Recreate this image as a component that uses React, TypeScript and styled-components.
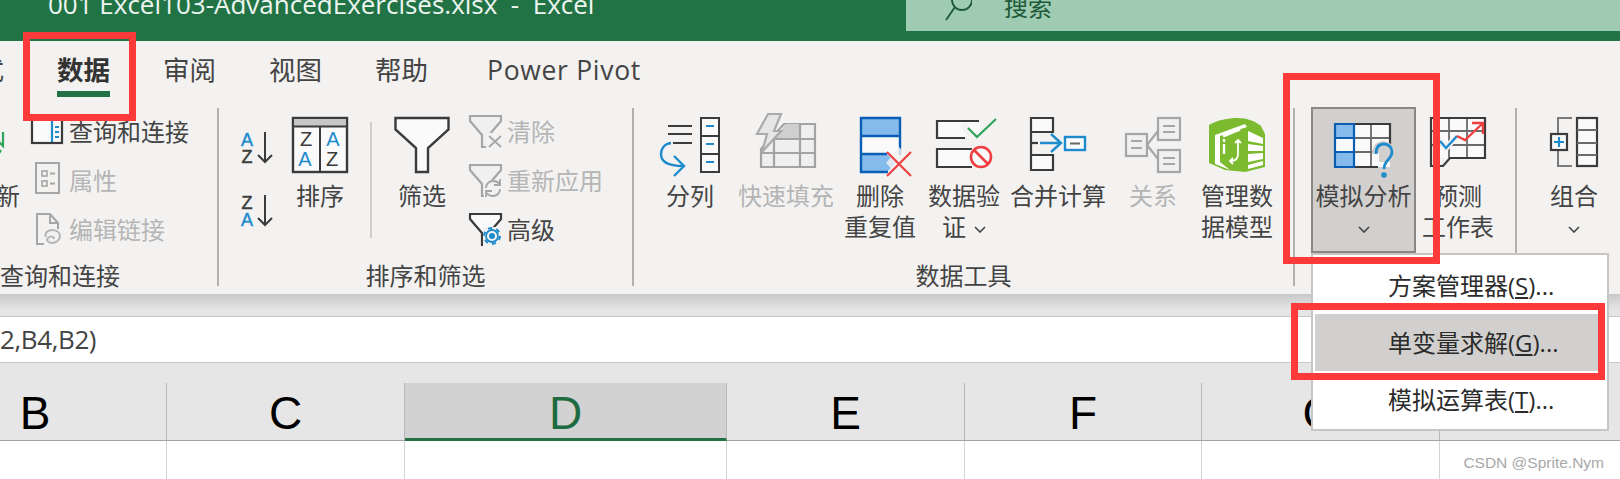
import React from 'react'
import styled, { createGlobalStyle } from 'styled-components'

const GlobalStyle = createGlobalStyle`
    html, body {
        margin: 0;
        padding: 0;
        background: #fff;
    }
`

const FONT = `"Open Sans", "Noto Sans CJK SC", sans-serif`
const DARK = '#3b3b3b'
const BLUE = '#1e8bcd'
const NAVY = '#0a5fb4'
const SKY = '#85bbec'
const GRAY = '#a6a6a6'
const PAPER = '#fafafa'

const Page = styled.div`
    position: relative;
    width: 1620px;
    height: 479px;
    overflow: hidden;
    font-family: ${ FONT };
    background: #fff;
`

const TitleBar = styled.div`
    display: flex;
    height: 41px;
    overflow: hidden;
    background: #217346;
`

const FileName = styled.div`
    margin: -11px 0 0 48px;
    font-size: 26px;
    line-height: 30px;
    color: #eef5f0;
    white-space: pre;
`

const SearchBox = styled.div`
    display: flex;
    align-items: flex-start;
    gap: 32px;
    margin-left: auto;
    padding-left: 38px;
    width: 676px;
    height: 31px;
    background: #9fcbb2;
    color: #1d5a38;
    font-size: 24px;
    line-height: 24px;
`

const SearchText = styled.span`
    margin-top: -5px;
`

const TabRow = styled.div`
    display: flex;
    gap: 53px;
    height: 67px;
    margin-left: -49px;
    background: #f3f2f1;
`

const Tab = styled.div<{ $active?: boolean; $latin?: boolean }>`
    height: 56px;
    margin: 0;
    padding-top: 11px;
    margin-left: ${ p => p.$latin ? '6px' : '0' };
    box-sizing: border-box;
    border-bottom: ${ p => p.$active ? '6px solid #217346' : '0' };
    font-size: 26.5px;
    letter-spacing: ${ p => p.$latin ? '0.7px' : '0' };
    line-height: 36px;
    font-weight: ${ p => p.$active ? 700 : 400 };
    color: ${ p => p.$active ? '#333' : '#444' };
    white-space: nowrap;
`

const Ribbon = styled.div`
    display: flex;
    height: 186px;
    background: #f3f2f1;
`

const Group = styled.div<{ $w: number }>`
    display: flex;
    flex-direction: column;
    flex: none;
    width: ${ p => p.$w }px;
`

const GroupBody = styled.div<{ $pad?: number }>`
    display: flex;
    height: 152px;
    padding-left: ${ p => p.$pad ?? 0 }px;
`

const GroupLabel = styled.div<{ $left?: boolean }>`
    height: 32px;
    font-size: 24px;
    line-height: 32px;
    color: #444;
    white-space: nowrap;
    text-align: ${ p => p.$left ? 'left' : 'center' };
`

const GroupLine = styled.div`
    flex: none;
    width: 2px;
    height: 178px;
    background: #b3b0ad;
`

const BigButton = styled.div<{ $w: number; $gapLeft?: number; $off?: boolean }>`
    display: flex;
    flex-direction: column;
    align-items: center;
    flex: none;
    width: ${ p => p.$w }px;
    margin-left: ${ p => p.$gapLeft ?? 0 }px;
    padding-top: 9px;
    color: ${ p => p.$off ? '#b5b5b5' : '#444' };
`

const PressedButton = styled(BigButton)`
    box-sizing: border-box;
    height: 146px;
    margin-top: -1px;
    padding-top: 14px;
    background: #d2d0ce;
    border: 2px solid #8a8886;
`

const IconSlot = styled.div<{ $h?: number; $nudge?: number }>`
    display: flex;
    justify-content: center;
    flex: none;
    height: ${ p => p.$h ?? 64 }px;
    padding-left: ${ p => p.$nudge ?? 0 }px;

    svg {
        display: block;
        overflow: visible;
    }
`

const ButtonLabel = styled.div`
    margin-top: -1px;
    font-size: 24px;
    line-height: 31px;
    text-align: center;
    white-space: nowrap;
`

const Chevron = styled.svg<{ $lone?: boolean }>`
    display: inline-block;
    width: 12px;
    height: 7px;
    margin-left: ${ p => p.$lone ? 0 : 8 }px;
    vertical-align: 3px;
`

const SmallColumn = styled.div<{ $gapLeft: number }>`
    display: flex;
    flex-direction: column;
    flex: none;
    height: 147px;
    margin: -2px 0 0 ${ p => p.$gapLeft }px;
`

const SmallRow = styled.div<{ $off?: boolean }>`
    display: flex;
    align-items: center;
    gap: 6px;
    height: 49px;
    font-size: 24px;
    white-space: nowrap;
    color: ${ p => p.$off ? '#b5b5b5' : '#444' };

    svg {
        flex: none;
        overflow: visible;
    }
`

const SortColumn = styled.div`
    display: flex;
    flex-direction: column;
    gap: 32px;
    flex: none;
    padding-top: 24px;

    svg {
        display: block;
        overflow: visible;
    }
`

const InnerLine = styled.div<{ $gapLeft: number }>`
    flex: none;
    width: 2px;
    height: 116px;
    margin: 14px 0 0 ${ p => p.$gapLeft }px;
    background: #d0cecc;
`

const ShadowBand = styled.div`
    height: 22px;
    background: linear-gradient(#c9c9c9, #e4e4e4 70%, #e6e6e6);
    border-bottom: 1px solid #c6c6c6;
`

const FormulaBar = styled.div`
    box-sizing: border-box;
    height: 46px;
    font-size: 26px;
    letter-spacing: -0.4px;
    line-height: 44px;
    color: #444;
    background: #fff;
    border-bottom: 1px solid #c8c8c8;
`

const HeaderStrip = styled.div`
    display: flex;
    height: 78px;
    box-sizing: border-box;
    margin-left: -96px;
    padding-top: 20px;
    background: #e6e6e6;
    border-bottom: 1px solid #a3a3a3;
`

const HeaderCell = styled.div<{ $w: number; $sel?: boolean }>`
    flex: none;
    box-sizing: border-box;
    width: ${ p => p.$w }px;
    height: ${ p => p.$sel ? 58 : 57 }px;
    font-family: "Liberation Sans", sans-serif;
    font-size: 46px;
    line-height: 60px;
    text-align: center;
    color: ${ p => p.$sel ? '#1f6b41' : '#000' };
    background: ${ p => p.$sel ? '#d2d2d2' : 'transparent' };
    border-right: 1px solid #b8b8b8;
    border-bottom: ${ p => p.$sel ? '3px solid #217346' : '0' };
`

const CellRow = styled.div`
    display: flex;
    height: 38px;
    margin-left: -96px;
`

const Cell = styled.div<{ $w: number }>`
    flex: none;
    box-sizing: border-box;
    width: ${ p => p.$w }px;
    border-right: 1px solid #d4d4d4;
`

const Menu = styled.div`
    position: absolute;
    left: 1311px;
    top: 253px;
    box-sizing: border-box;
    width: 298px;
    height: 178px;
    padding: 2px 0 0 2px;
    background: #fff;
    border: 2px solid #c8c6c4;
`

const MenuItem = styled.div<{ $on?: boolean }>`
    height: 57px;
    margin-right: 8px;
    padding-left: 73px;
    font-size: 24px;
    line-height: 57px;
    color: #2b2b2b;
    white-space: nowrap;
    background: ${ p => p.$on ? '#d2d0ce' : 'transparent' };
`

const RedFrame = styled.div<{ $x: number; $y: number; $w: number; $h: number }>`
    position: absolute;
    left: ${ p => p.$x }px;
    top: ${ p => p.$y }px;
    width: ${ p => p.$w }px;
    height: ${ p => p.$h }px;
    box-sizing: border-box;
    border: 7px solid #fd3a3a;
`

const Watermark = styled.div`
    position: absolute;
    right: 16px;
    top: 453px;
    font-family: "Liberation Sans", sans-serif;
    font-size: 15.500px;
    line-height: 20px;
    color: #a8a8a8;
`

const SvgLetter = styled.text`
    font-family: "Liberation Sans", sans-serif;
`

const Down: React.FC<{ lone?: boolean }> = ({ lone }) => (
    <Chevron $lone={ lone } viewBox="0 0 12 7"><path d="M1 1l5 5 5-5" fill="none" stroke="#444" strokeWidth="1.6" /></Chevron>
)

const SearchIcon = () => (
    <svg width="28" height="24" viewBox="0 0 28 24">
        <circle cx="18" cy="0" r="10" fill="none" stroke="#1d5a38" strokeWidth="1.8" />
        <path d="M11 7L2 20" stroke="#1d5a38" strokeWidth="1.8" />
    </svg>
)

const SortIcon: React.FC<{ top: string; bottom: string; topBlue: boolean }> = ({ top, bottom, topBlue }) => (
    <svg width="32" height="31" viewBox="0 0 32 31">
        <SvgLetter x="7" y="13.5" fontSize="18" textAnchor="middle" fill={ topBlue ? BLUE : DARK } stroke={ topBlue ? BLUE : DARK } strokeWidth="0.5">{ top }</SvgLetter>
        <SvgLetter x="7" y="31" fontSize="18" textAnchor="middle" fill={ topBlue ? DARK : BLUE } stroke={ topBlue ? DARK : BLUE } strokeWidth="0.5">{ bottom }</SvgLetter>
        <path d="M25 0v30M18 23l7 7 7-7" fill="none" stroke={ DARK } strokeWidth="2" />
    </svg>
)

const SortBigIcon = () => (
    <svg width="56" height="56" viewBox="0 0 56 56">
        <rect x="1" y="1" width="54" height="54" fill={ PAPER } stroke={ DARK } strokeWidth="2.4" />
        <rect x="2" y="2" width="52" height="7" fill="#c8c6c4" />
        <path d="M1 9.5h54M28 9.5v46" stroke={ DARK } strokeWidth="2" />
        <SvgLetter x="14" y="29" fontSize="20" textAnchor="middle" fill={ DARK }>Z</SvgLetter>
        <SvgLetter x="13" y="49" fontSize="20" textAnchor="middle" fill={ BLUE }>A</SvgLetter>
        <SvgLetter x="41" y="29" fontSize="20" textAnchor="middle" fill={ BLUE }>A</SvgLetter>
        <SvgLetter x="40" y="49" fontSize="20" textAnchor="middle" fill={ DARK }>Z</SvgLetter>
    </svg>
)

const FunnelIcon = () => (
    <svg width="56" height="56" viewBox="0 0 56 56">
        <path d="M1.5 1h53v11.500L34 31v24H22V31L1.500 12.500z" fill={ PAPER } stroke={ DARK } strokeWidth="2.4" />
    </svg>
)

const TextColumnsIcon = () => (
    <svg width="60" height="60" viewBox="0 0 60 60">
        <path d="M8 9h24M8 17h24M13 26h19" stroke={ DARK } strokeWidth="2" />
        <rect x="41" y="1" width="18" height="54" fill={ PAPER } stroke={ DARK } strokeWidth="2" />
        <path d="M41 19h18M41 37h18" stroke={ DARK } strokeWidth="2" />
        <path d="M46 9h8M46 27h8M46 45h8" stroke={ BLUE } strokeWidth="2.200" />
        <path d="M11 26C4 27 1 32 1 37c0 7 6 12 22 12M14 39l10 10-10 10" fill="none" stroke={ BLUE } strokeWidth="2.400" />
    </svg>
)

const FlashFillIcon = () => (
    <svg width="60" height="64" viewBox="0 0 60 64">
        <g transform="translate(0 -4)">
            <path d="M5 54V36L28 11h31v43z" fill="#efefef" stroke="#a3a3a3" strokeWidth="2.200" />
            <path d="M18 26L30 11h14v14z" fill="#cfcfcf" />
            <path d="M18 54V26h41M44 11v43M5 40h54" fill="none" stroke="#a3a3a3" strokeWidth="2.200" />
            <path d="M12 1h13l-7 17h7L6 39l5-18H1z" fill="#e6e6e6" stroke="#ababab" strokeWidth="2.200" />
        </g>
    </svg>
)

const RemoveDupIcon = () => (
    <svg width="52" height="60" viewBox="0 0 52 60">
        <rect x="1" y="1" width="39" height="18" fill={ SKY } />
        <rect x="1" y="19" width="39" height="18" fill={ PAPER } />
        <path d="M1 37h26l9 9-9 9H1z" fill={ SKY } />
        <path d="M28 55H1V1h39v37M1 19h39M1 37h26" fill="none" stroke={ NAVY } strokeWidth="2.400" />
        <path d="M39 30l13 14-13 16-13-14z" fill="#f3f2f1" opacity="0.8" />
        <path d="M27 59L51 35M27 35l24 24" stroke="#ee4040" strokeWidth="2.200" />
    </svg>
)

const ValidationIcon = () => (
    <svg width="60" height="52" viewBox="0 0 60 52">
        <rect x="1" y="4" width="43" height="17" fill={ PAPER } />
        <rect x="1" y="32" width="36" height="18" fill={ PAPER } />
        <path d="M43 4H1v17h28M36 32H1v18h35" fill="none" stroke={ DARK } strokeWidth="2.200" />
        <path d="M27 7l9 12 6 0" fill="none" stroke="#f3f2f1" strokeWidth="7" />
        <path d="M32 11l9 9L60 2" fill="none" stroke="#2ea55a" strokeWidth="2.200" />
        <circle cx="45" cy="40" r="12" fill="#f3f2f1" />
        <circle cx="45" cy="40" r="10" fill={ PAPER } stroke="#ee4040" strokeWidth="2.600" />
        <path d="M38 33l14 14" stroke="#ee4040" strokeWidth="2.600" />
    </svg>
)

const ConsolidateIcon = () => (
    <svg width="56" height="56" viewBox="0 0 56 56">
        <path d="M1 1h22v14H1zM1 38h22v15H1z" fill={ PAPER } />
        <path d="M1 15h22v-14H1v52h22V38H1" fill="none" stroke={ DARK } strokeWidth="2.200" />
        <path d="M1 26h7" stroke={ DARK } strokeWidth="2.200" />
        <path d="M10 26h20M21 17l10 9-10 9" fill="none" stroke={ BLUE } strokeWidth="2.400" />
        <rect x="35" y="20" width="20" height="13" fill={ PAPER } stroke={ BLUE } strokeWidth="2.400" />
        <path d="M40 26.500h10" stroke="#666" strokeWidth="2" />
    </svg>
)

const RelationsIcon = () => (
    <svg width="56" height="56" viewBox="0 0 56 56" fill="none" stroke={ GRAY } strokeWidth="2.200">
        <rect x="1" y="17" width="21" height="22" fill="#f0f0f0" />
        <rect x="33" y="1" width="22" height="22" fill="#f0f0f0" />
        <rect x="33" y="33" width="22" height="22" fill="#f0f0f0" />
        <path d="M22 28l11-14M22 28l11 14" />
        <path d="M6 24h11M6 31h11M38 9h12M38 15h12M38 41h12M38 47h12" strokeWidth="2" />
    </svg>
)

const DataModelIcon = () => (
    <svg width="56" height="56" viewBox="0 0 56 56">
        <path d="M0 8C9 3 18 1 29 1c9 0 17 3 23 8l4 8v33l-20 5L16 53 0 46z" fill="#7cbb30" />
        <path d="M6 18L36 7l2 3L11 19v26l10 8-15-6z" fill="#fff" />
        <path d="M39 14l15 7v6l-15-3zM39 27l15 2v5l-15 0zM39 37l15-1v6l-15 3zM39 48l15-4v4l-15 4z" fill="#fff" />
        <path d="M14 19l17-7" stroke="#fff" strokeWidth="3.400" />
        <path d="M15 22v3M15 27v10" stroke="#fff" strokeWidth="2.400" />
        <path d="M29 23v14c0 5-3 7-7 7M26 26l3-3 3 3M24 41l-3 3 3 3" fill="none" stroke="#fff" strokeWidth="1.800" />
    </svg>
)

const WhatIfIcon = () => (
    <svg width="62" height="58" viewBox="0 0 62 58">
        <rect x="1" y="1" width="55" height="43" fill={ PAPER } />
        <rect x="1" y="1" width="19" height="14" fill={ SKY } />
        <rect x="1" y="29" width="19" height="15" fill={ SKY } />
        <path d="M37 1v43M20 15h36M20 29h30" stroke="#6b6b6b" strokeWidth="1.800" />
        <path d="M20 1h36v32M20 44h24" fill="none" stroke={ DARK } strokeWidth="2.200" />
        <path d="M20 1H1v43h19zM1 15h19M1 29h19" fill="none" stroke={ NAVY } strokeWidth="2.200" />
        <path d="M38 31c0-8 5-13 11-13s11 4 11 11c0 5-3 8-5 10h-10V30z" fill="#d2d0ce" />
        <path d="M42 31c0-7 3-10 8-10 5 0 8 4 8 8 0 7-8 8-8 17" fill="none" stroke={ BLUE } strokeWidth="2.800" />
        <circle cx="50" cy="52" r="2.800" fill={ BLUE } />
    </svg>
)

const ForecastIcon = () => (
    <svg width="56" height="50" viewBox="0 0 56 50">
        <rect x="1" y="1" width="54" height="40" fill={ PAPER } />
        <path d="M19 1v40M37 1v40M1 14h54M1 28h54" stroke="#6b6b6b" strokeWidth="1.800" />
        <path d="M1 41V1h54v40H20l-7 8H1z" fill="none" stroke={ DARK } strokeWidth="2.200" />
        <path d="M8 21l8 10 11-12" fill="none" stroke="#f3f2f1" strokeWidth="6" />
        <path d="M10 24l6 7 11-12" fill="none" stroke={ BLUE } strokeWidth="2.400" />
        <path d="M27 19l8 4L52 7M42 6h11v11" fill="none" stroke="#ee4040" strokeWidth="2.400" />
    </svg>
)

const GroupIcon = () => (
    <svg width="48" height="50" viewBox="0 0 48 50">
        <path d="M22 1H8v15M8 34v15h14" fill="none" stroke="#7a7a7a" strokeWidth="2" />
        <rect x="1" y="17" width="16" height="16" fill={ PAPER } stroke={ DARK } strokeWidth="2.200" />
        <path d="M9 20v10M4 25h10" stroke={ BLUE } strokeWidth="2.200" />
        <rect x="27" y="1" width="20" height="48" fill={ PAPER } stroke={ DARK } strokeWidth="2.200" />
        <path d="M27 13h20M27 26h20M27 38h20" stroke="#6b6b6b" strokeWidth="1.800" />
    </svg>
)

const RefreshStub = () => (
    <svg width="24" height="64" viewBox="0 0 24 64">
        <path d="M2 24l5 5V15M2 38l3-5" fill="none" stroke="#2ea55a" strokeWidth="2.200" />
    </svg>
)

const QueriesIcon = () => (
    <svg width="32" height="32" viewBox="0 0 32 32">
        <rect x="1" y="1" width="30" height="27" fill={ PAPER } stroke={ DARK } strokeWidth="2.200" />
        <path d="M21 2v25" stroke={ BLUE } strokeWidth="2.200" />
        <path d="M24 12h4M24 17h4M24 22h4" stroke={ BLUE } strokeWidth="2" />
    </svg>
)

const PropertiesIcon = () => (
    <svg width="32" height="32" viewBox="0 0 32 32" fill="none" stroke={ GRAY } strokeWidth="2">
        <rect x="5" y="-1" width="23" height="30" />
        <rect x="11" y="7" width="5" height="5" strokeWidth="1.600" />
        <rect x="11" y="17" width="5" height="5" strokeWidth="1.600" />
        <path d="M19 9.500h5M19 19.500h5" />
    </svg>
)

const EditLinksIcon = () => (
    <svg width="32" height="32" viewBox="0 0 32 32" fill="none" stroke={ GRAY } strokeWidth="2">
        <path d="M13 31H6V1h13l8 9v6M19 1v9h8" />
        <path d="M15 24c-2-4 2-7 6-7s8 2 8 6-4 7-8 7-6-3-4-5 6-2 6 1" stroke="#b5b5b5" />
    </svg>
)

const SmallFunnel: React.FC<{ color: string }> = ({ color }) => (
    <path d="M18 32H13V20L1 6V1h31v5L20 20" fill="#f0f0f0" stroke={ color } strokeWidth="2.200" />
)

const ClearFilterIcon = () => (
    <svg width="32" height="32" viewBox="0 0 32 32">
        <SmallFunnel color={ GRAY } />
        <rect x="17" y="18" width="16" height="15" fill="#f3f2f1" />
        <path d="M20 21l12 11M32 21L20 32" stroke={ GRAY } strokeWidth="1.800" />
    </svg>
)

const ReapplyIcon = () => (
    <svg width="32" height="32" viewBox="0 0 32 32">
        <SmallFunnel color={ GRAY } />
        <rect x="15" y="16" width="18" height="17" fill="#f3f2f1" />
        <path d="M17 24c0-4 3-7 7-7 3 0 5 1 7 3M31 15v6h-6M31 25c0 4-3 7-7 7-3 0-5-1-6-3M17 33v-6h6" fill="none" stroke={ GRAY } strokeWidth="1.800" />
    </svg>
)

const AdvancedIcon = () => (
    <svg width="32" height="32" viewBox="0 0 32 32">
        <path d="M18 32H13V20L1 6V1h31v5L20 20" fill={ PAPER } stroke={ DARK } strokeWidth="2.200" />
        <rect x="14" y="14" width="19" height="19" fill="#f3f2f1" />
        <circle cx="23" cy="23" r="6" fill="#f3f2f1" stroke={ BLUE } strokeWidth="1.800" />
        <circle cx="23" cy="23" r="8" fill="none" stroke={ BLUE } strokeWidth="2" strokeDasharray="4.190 4.190" />
        <circle cx="23" cy="23" r="3" fill={ BLUE } />
    </svg>
)

const columnWidths = [ 263, 238, 322, 238, 237, 238, 200 ]
const columnNames = [ 'B', 'C', 'D', 'E', 'F', 'G', '' ]

const App: React.FC = () => {
    return (
        <Page>
            <GlobalStyle />
            <TitleBar>
                <FileName>001 Excel103-AdvancedExercises.xlsx  -  Excel</FileName>
                <SearchBox>
                    <SearchIcon />
                    <SearchText>搜索</SearchText>
                </SearchBox>
            </TitleBar>
            <TabRow>
                <Tab>公式</Tab>
                <Tab $active>数据</Tab>
                <Tab>审阅</Tab>
                <Tab>视图</Tab>
                <Tab>帮助</Tab>
                <Tab $latin>Power Pivot</Tab>
            </TabRow>
            <Ribbon>
                <Group $w={ 217 }>
                    <GroupBody>
                        <BigButton $w={ 24 } $gapLeft={ -4 }>
                            <IconSlot><RefreshStub /></IconSlot>
                            <ButtonLabel>新</ButtonLabel>
                        </BigButton>
                        <SmallColumn $gapLeft={ 11 }>
                            <SmallRow><QueriesIcon />查询和连接</SmallRow>
                            <SmallRow $off><PropertiesIcon />属性</SmallRow>
                            <SmallRow $off><EditLinksIcon />编辑链接</SmallRow>
                        </SmallColumn>
                    </GroupBody>
                    <GroupLabel $left>查询和连接</GroupLabel>
                </Group>
                <GroupLine />
                <Group $w={ 413 }>
                    <GroupBody $pad={ 21 }>
                        <SortColumn>
                            <SortIcon top="A" bottom="Z" topBlue />
                            <SortIcon top="Z" bottom="A" topBlue={ false } />
                        </SortColumn>
                        <BigButton $w={ 64 } $gapLeft={ 16 }>
                            <IconSlot><SortBigIcon /></IconSlot>
                            <ButtonLabel>排序</ButtonLabel>
                        </BigButton>
                        <InnerLine $gapLeft={ 18 } />
                        <BigButton $w={ 64 } $gapLeft={ 18 }>
                            <IconSlot><FunnelIcon /></IconSlot>
                            <ButtonLabel>筛选</ButtonLabel>
                        </BigButton>
                        <SmallColumn $gapLeft={ 15 }>
                            <SmallRow $off><ClearFilterIcon />清除</SmallRow>
                            <SmallRow $off><ReapplyIcon />重新应用</SmallRow>
                            <SmallRow><AdvancedIcon />高级</SmallRow>
                        </SmallColumn>
                    </GroupBody>
                    <GroupLabel>排序和筛选</GroupLabel>
                </Group>
                <GroupLine />
                <Group $w={ 659 }>
                    <GroupBody $pad={ 8 }>
                        <BigButton $w={ 96 }>
                            <IconSlot><TextColumnsIcon /></IconSlot>
                            <ButtonLabel>分列</ButtonLabel>
                        </BigButton>
                        <BigButton $w={ 96 } $off>
                            <IconSlot><FlashFillIcon /></IconSlot>
                            <ButtonLabel>快速填充</ButtonLabel>
                        </BigButton>
                        <BigButton $w={ 92 }>
                            <IconSlot $nudge={ 12 }><RemoveDupIcon /></IconSlot>
                            <ButtonLabel>删除<br />重复值</ButtonLabel>
                        </BigButton>
                        <BigButton $w={ 76 }>
                            <IconSlot $nudge={ 4 }><ValidationIcon /></IconSlot>
                            <ButtonLabel>数据验<br />证<Down /></ButtonLabel>
                        </BigButton>
                        <BigButton $w={ 112 }>
                            <IconSlot><ConsolidateIcon /></IconSlot>
                            <ButtonLabel>合并计算</ButtonLabel>
                        </BigButton>
                        <BigButton $w={ 78 } $off>
                            <IconSlot><RelationsIcon /></IconSlot>
                            <ButtonLabel>关系</ButtonLabel>
                        </BigButton>
                        <BigButton $w={ 90 }>
                            <IconSlot><DataModelIcon /></IconSlot>
                            <ButtonLabel>管理数<br />据模型</ButtonLabel>
                        </BigButton>
                    </GroupBody>
                    <GroupLabel>数据工具</GroupLabel>
                </Group>
                <GroupLine />
                <Group $w={ 220 }>
                    <GroupBody $pad={ 16 }>
                        <PressedButton $w={ 105 }>
                            <IconSlot $h={ 58 } $nudge={ 3 }><WhatIfIcon /></IconSlot>
                            <ButtonLabel>模拟分析<br /><Down lone /></ButtonLabel>
                        </PressedButton>
                        <BigButton $w={ 84 }>
                            <IconSlot><ForecastIcon /></IconSlot>
                            <ButtonLabel>预测<br />工作表</ButtonLabel>
                        </BigButton>
                    </GroupBody>
                </Group>
                <GroupLine />
                <Group $w={ 100 }>
                    <GroupBody $pad={ 17 }>
                        <BigButton $w={ 80 }>
                            <IconSlot><GroupIcon /></IconSlot>
                            <ButtonLabel>组合<br /><Down lone /></ButtonLabel>
                        </BigButton>
                    </GroupBody>
                </Group>
            </Ribbon>
            <ShadowBand />
            <FormulaBar>2,B4,B2)</FormulaBar>
            <HeaderStrip>
                { columnNames.map((name, i) => (
                    <HeaderCell key={ i } $w={ columnWidths[i] } $sel={ name === 'D' }>{ name }</HeaderCell>
                )) }
            </HeaderStrip>
            <CellRow>
                { columnNames.map((name, i) => <Cell key={ i } $w={ columnWidths[i] } />) }
            </CellRow>
            <Menu>
                <MenuItem>方案管理器(<u>S</u>)...</MenuItem>
                <MenuItem $on>单变量求解(<u>G</u>)...</MenuItem>
                <MenuItem>模拟运算表(<u>T</u>)...</MenuItem>
            </Menu>
            <RedFrame $x={ 23 } $y={ 32 } $w={ 113 } $h={ 89 } />
            <RedFrame $x={ 1283 } $y={ 73 } $w={ 157 } $h={ 191 } />
            <RedFrame $x={ 1291 } $y={ 303 } $w={ 314 } $h={ 77 } />
            <Watermark>CSDN @Sprite.Nym</Watermark>
        </Page>
    )
}

export default App
